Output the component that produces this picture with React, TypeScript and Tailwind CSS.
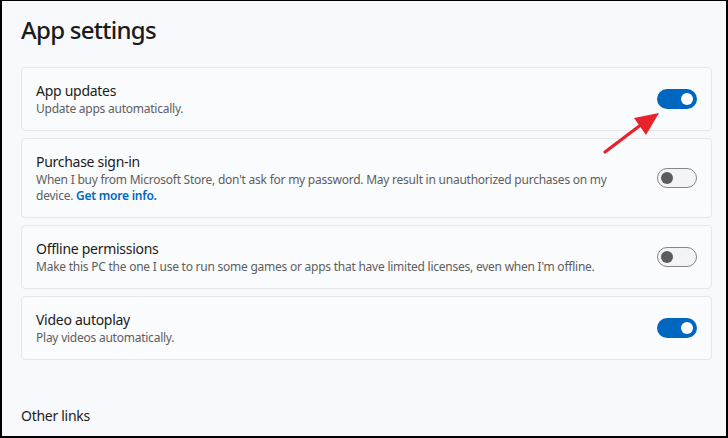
import type { ReactNode } from 'react';

function Toggle({ on }: { on: boolean }) {
  if (on) {
    return (
      <div className="w-10 h-5 rounded-full bg-[#0067c0] flex items-center justify-end px-1 shrink-0">
        <div className="w-3 h-3 rounded-full bg-white" />
      </div>
    );
  }
  return (
    <div className="w-10 h-5 rounded-full border border-[#868686] bg-[#f4f4f6] flex items-center px-[3px] shrink-0">
      <div className="w-3 h-3 rounded-full bg-[#5c5c5c]" />
    </div>
  );
}

function SettingRow({
  title,
  children,
  on,
}: {
  title: string;
  children: ReactNode;
  on: boolean;
}) {
  return (
    <div className="flex items-center justify-between rounded-[4px] border border-[#e6e7eb] bg-[#fafbfd] pl-[14px] pr-[14px] py-[13px]">
      <div className="flex flex-col">
        <p className="text-[14px] leading-5 tracking-[-0.02em] text-[#1b1b1b]">{title}</p>
        <p className="text-[12px] leading-4 tracking-[-0.02em] text-[#5e5e5e]">{children}</p>
      </div>
      <Toggle on={on} />
    </div>
  );
}

export default function App() {
  return (
    <div
      className="relative w-[728px] h-[438px] overflow-hidden bg-[#f8f9fc] border-l-2 border-r-2 border-b-2 border-t border-black pl-[19px] pr-[14px]"
      style={{ fontFamily: '"Noto Sans", "Open Sans", sans-serif' }}
    >
      <h1 className="mt-[13px] text-[24px] leading-8 font-medium tracking-[-0.03em] text-[#1b1b1b]">
        App settings
      </h1>

      <div className="mt-[21px] flex flex-col gap-[7px]">
        <SettingRow title="App updates" on>
          Update apps automatically.
        </SettingRow>
        <SettingRow title="Purchase sign-in" on={false}>
          When I buy from Microsoft Store, don't ask for my password. May result in unauthorized purchases on my
          <br />
          device. <span className="font-semibold text-[#0067c0]">Get more info.</span>
        </SettingRow>
        <SettingRow title="Offline permissions" on={false}>
          Make this PC the one I use to run some games or apps that have limited licenses, even when I'm offline.
        </SettingRow>
        <SettingRow title="Video autoplay" on>
          Play videos automatically.
        </SettingRow>
      </div>

      <p className="mt-[46px] text-[14px] leading-5 tracking-[-0.02em] text-[#1b1b1b]">Other links</p>

      {/* red annotation arrow */}
      <svg
        className="absolute left-0 top-0 pointer-events-none"
        width="728"
        height="438"
        viewBox="0 0 728 438"
      >
        <line x1="603" y1="151" x2="640" y2="123" stroke="#e8222b" strokeWidth="3.2" strokeLinecap="round" />
        <polygon points="657,112 632,117 644,134" fill="#e8222b" />
      </svg>
    </div>
  );
}
